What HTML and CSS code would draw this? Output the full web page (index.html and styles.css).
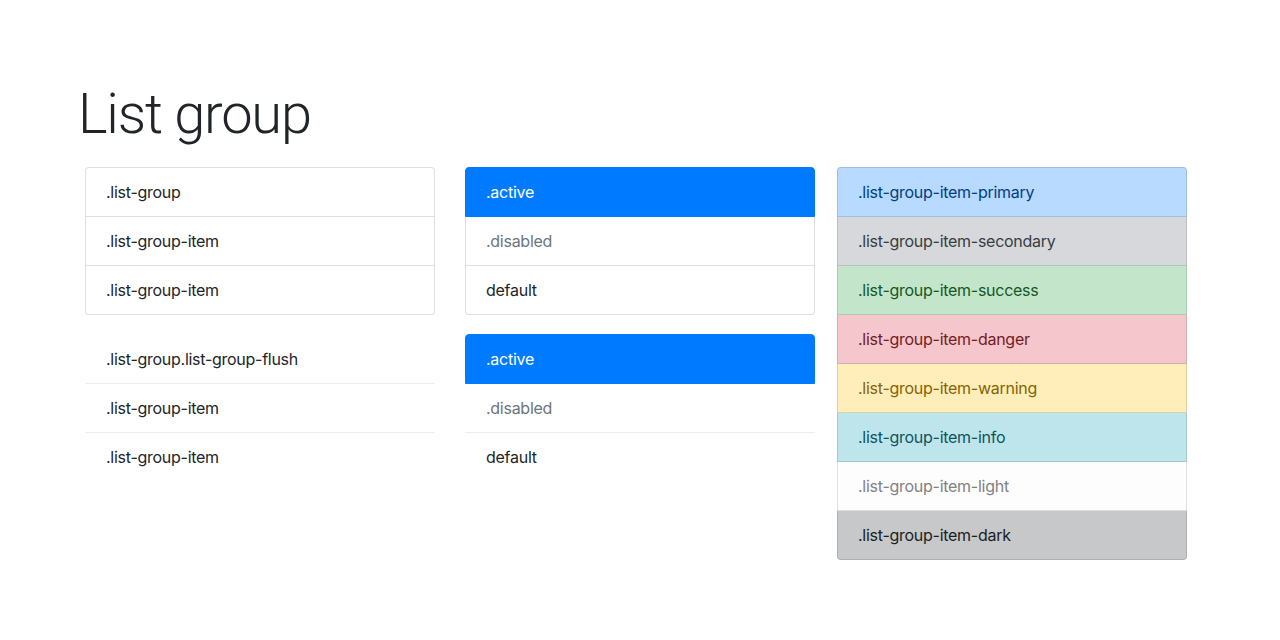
FILE: index.html
```html
<!DOCTYPE html>
<html>
<head>
<meta charset="utf-8">
<title>List group</title>
<link rel="stylesheet" href="styles.css">
</head>
<body>
<div class="page">
  <h1 class="title">List group</h1>
  <div class="row">
    <div class="col">
      <ul class="list-group boxed">
        <li class="item">.list-group</li>
        <li class="item">.list-group-item</li>
        <li class="item">.list-group-item</li>
      </ul>
      <ul class="list-group flush">
        <li class="item">.list-group.list-group-flush</li>
        <li class="item">.list-group-item</li>
        <li class="item">.list-group-item</li>
      </ul>
    </div>
    <div class="col">
      <ul class="list-group boxed">
        <li class="item active">.active</li>
        <li class="item disabled">.disabled</li>
        <li class="item">default</li>
      </ul>
      <ul class="list-group flush flush-second">
        <li class="item active">.active</li>
        <li class="item disabled">.disabled</li>
        <li class="item">default</li>
      </ul>
    </div>
    <div class="col col-third">
      <ul class="list-group boxed">
        <li class="item primary">.list-group-item-primary</li>
        <li class="item secondary">.list-group-item-secondary</li>
        <li class="item success">.list-group-item-success</li>
        <li class="item danger">.list-group-item-danger</li>
        <li class="item warning">.list-group-item-warning</li>
        <li class="item info">.list-group-item-info</li>
        <li class="item light">.list-group-item-light</li>
        <li class="item dark">.list-group-item-dark</li>
      </ul>
    </div>
  </div>
</div>
</body>
</html>
```

FILE: styles.css
```css
* { box-sizing: border-box; }
html, body { margin: 0; padding: 0; background: #fff; }
body {
  font-family: Inter, "Liberation Sans", Arial, sans-serif;
  font-size: 16px;
  line-height: 24px;
  letter-spacing: -0.27px;
  color: #212529;
}
.page {
  padding: 81px 0 0 85px;
}
.title {
  margin: 0 0 19px -7px;
  font-family: Roboto, "Liberation Sans", sans-serif;
  font-weight: 300;
  font-size: 56px;
  line-height: 67px;
  letter-spacing: -1.2px;
  color: #212529;
}
.row {
  display: flex;
  align-items: flex-start;
}
.col {
  width: 350px;
  display: flex;
  flex-direction: column;
  margin-right: 30px;
}
.col-third { margin-left: -8px; margin-right: 0; }
.list-group {
  list-style: none;
  margin: 0;
  padding: 0;
}
.item {
  padding: 12px 20px;
  border: 1px solid rgba(0, 0, 0, 0.125);
  border-top-width: 0;
  background: #fff;
}
.boxed .item:first-child {
  border-top-width: 1px;
  border-radius: 4px 4px 0 0;
}
.boxed .item:last-child { border-radius: 0 0 4px 4px; }
.flush { margin-top: 20px; }
.flush .item {
  border-width: 0 1px 1px 1px;
  border-left-color: transparent;
  border-right-color: transparent;
  border-bottom-color: #ececec;
}
.flush .item:last-child { border-bottom-width: 0; }
.flush-second { margin-top: 19px; }
.flush-second .item.active {
  border-width: 1px;
  border-radius: 4px 4px 0 0;
}
.item.active {
  background: #007bff;
  border-color: #007bff;
  color: #fff;
}
.item.disabled { color: #6c757d; }
.primary { background: #b8daff; color: #004085; }
.secondary { background: #d6d8db; color: #383d41; }
.success { background: #c3e6cb; color: #155724; }
.danger { background: #f5c6cb; color: #721c24; }
.warning { background: #ffeeba; color: #856404; }
.info { background: #bee5eb; color: #0c5460; }
.light { background: #fdfdfe; color: #818182; }
.dark { background: #c6c8ca; color: #1b1e21; }
```
